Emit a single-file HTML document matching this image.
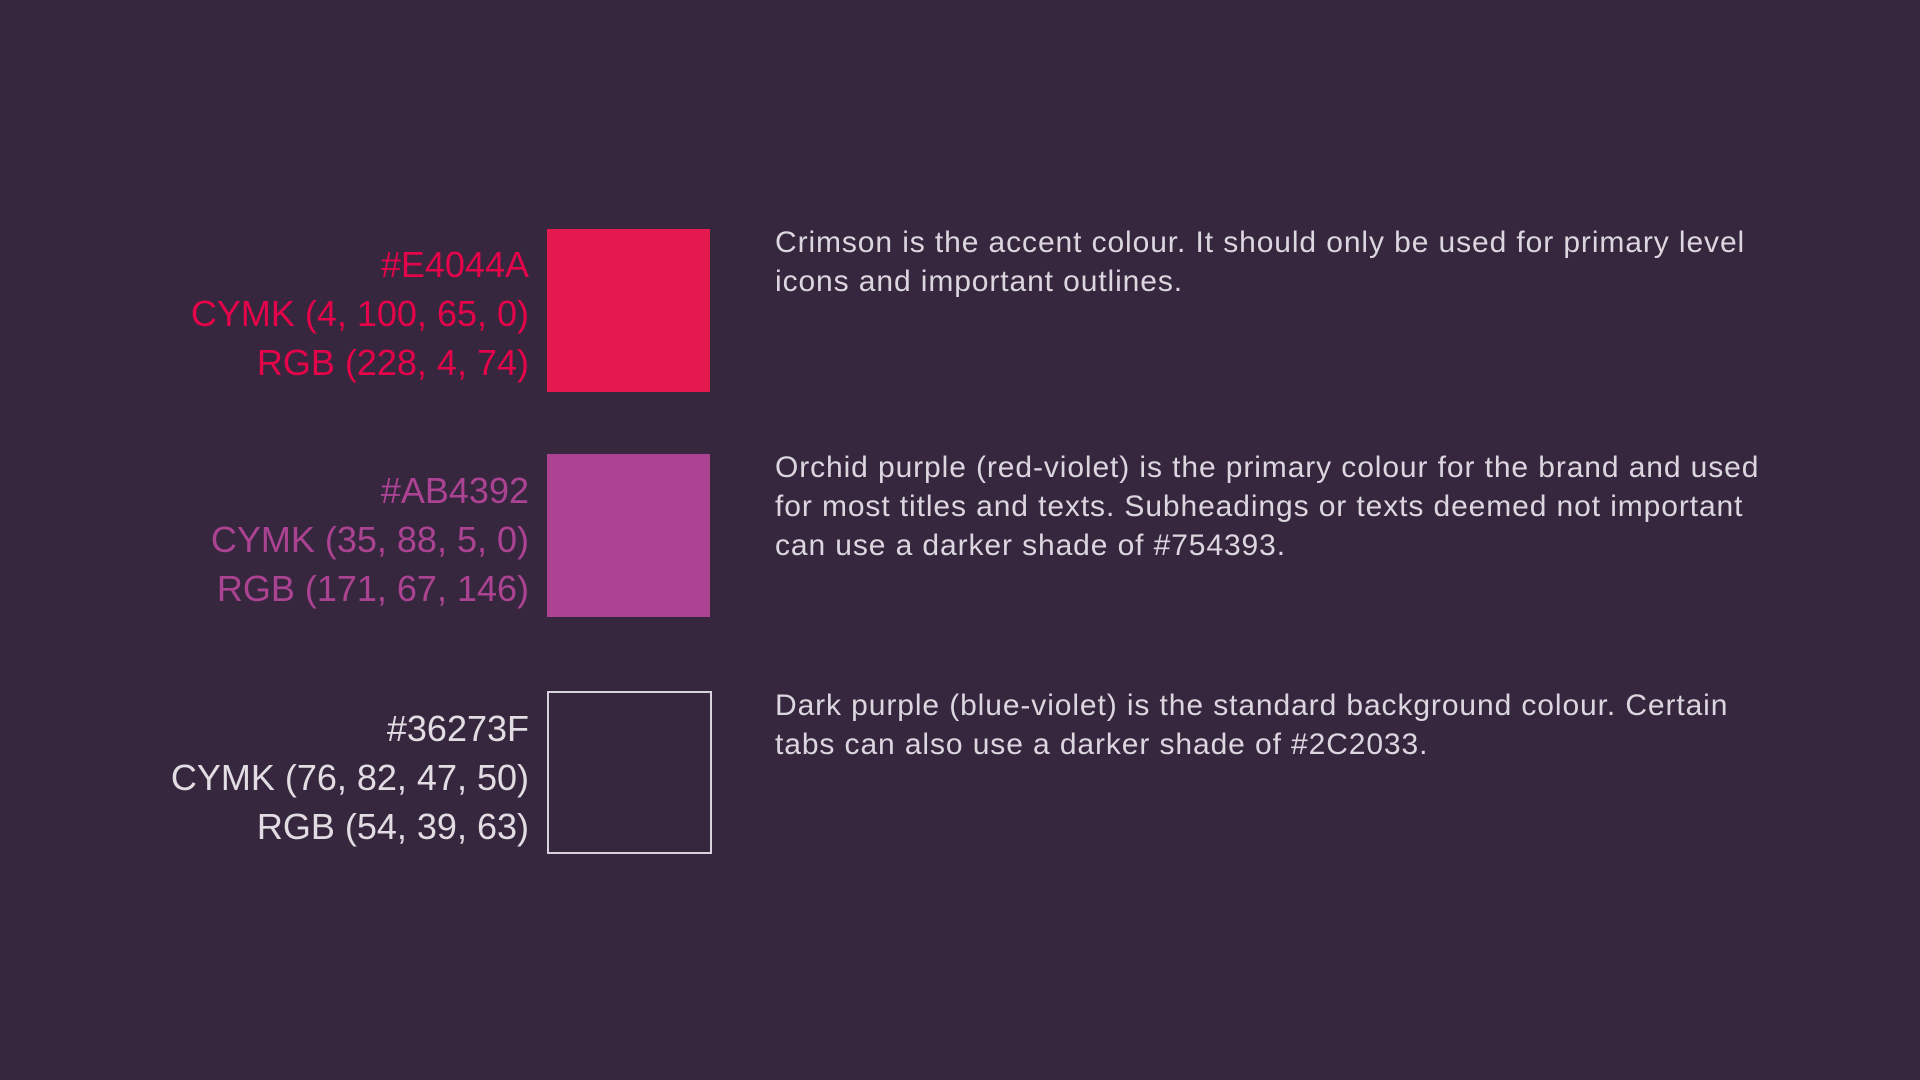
<!DOCTYPE html>
<html><head><meta charset="utf-8"><style>
html,body{margin:0;padding:0;width:1920px;height:1080px;background:#36273F;overflow:hidden}
body{position:relative;font-family:"Liberation Sans",sans-serif}
.l{position:absolute;right:1391px;text-align:right;font-size:36px;line-height:49px;letter-spacing:0px;white-space:nowrap}
.sq{position:absolute;left:547px;width:163px;height:163px;box-sizing:border-box}
.t{position:absolute;left:775px;font-size:30px;line-height:39px;letter-spacing:0.9px;color:#dcd6df;white-space:nowrap}
</style></head><body>
<div class="l" style="top:240px;color:#E4044A">#E4044A<br>CYMK (4, 100, 65, 0)<br>RGB (228, 4, 74)</div>
<div class="sq" style="top:229px;background:#E4194E"></div>
<div class="t" style="top:223px">Crimson is the accent colour. It should only be used for primary level<br>icons and important outlines.</div>

<div class="l" style="top:466px;color:#AB4392">#AB4392<br>CYMK (35, 88, 5, 0)<br>RGB (171, 67, 146)</div>
<div class="sq" style="top:454px;background:#AB4392"></div>
<div class="t" style="top:448px">Orchid purple (red-violet) is the primary colour for the brand and used<br>for most titles and texts. Subheadings or texts deemed not important<br>can use a darker shade of #754393.</div>

<div class="l" style="top:704px;color:#e2dde3">#36273F<br>CYMK (76, 82, 47, 50)<br>RGB (54, 39, 63)</div>
<div class="sq" style="top:691px;width:165px;border:2px solid #d8d2dc"></div>
<div class="t" style="top:686px">Dark purple (blue-violet) is the standard background colour. Certain<br>tabs can also use a darker shade of #2C2033.</div>
</body></html>
